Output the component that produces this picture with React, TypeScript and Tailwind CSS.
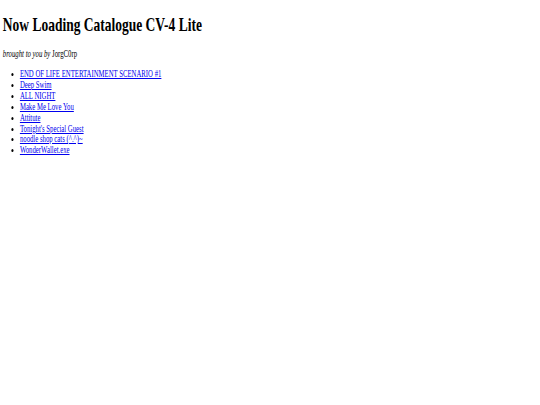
import React from 'react';

const titles = [
  'END OF LIFE ENTERTAINMENT SCENARIO #1',
  'Deep Swim',
  'ALL NIGHT',
  'Make Me Love You',
  'Attitute',
  "Tonight's Special Guest",
  'noodle shop cats (^.^)~',
  'WonderWallet.exe',
];

// The catalogue is drawn in a narrow, condensed serif: squeeze the whole page horizontally.
const App: React.FC = () => {
  return (
    <div className="min-h-[405px] bg-white">
      <div className="origin-top-left scale-x-[0.71] px-[4px] pt-[13px] text-black font-['Liberation_Serif',serif]">
        <h1 className="text-[19px] leading-[24px] font-bold">
          Now Loading Catalogue CV-4 Lite
        </h1>
        <p className="mt-[12px] text-[9.5px] leading-[11px]">
          <em>brought to you by</em> JorgC0rp
        </p>
        <ul className="mt-[9px] list-disc pl-[24px] text-[9.5px] leading-[10.9px]">
          {titles.map((t) => (
            <li key={t}>
              <a href="#" className="text-[#0000ee] underline">
                {t}
              </a>
            </li>
          ))}
        </ul>
      </div>
    </div>
  );
};

export default App;
